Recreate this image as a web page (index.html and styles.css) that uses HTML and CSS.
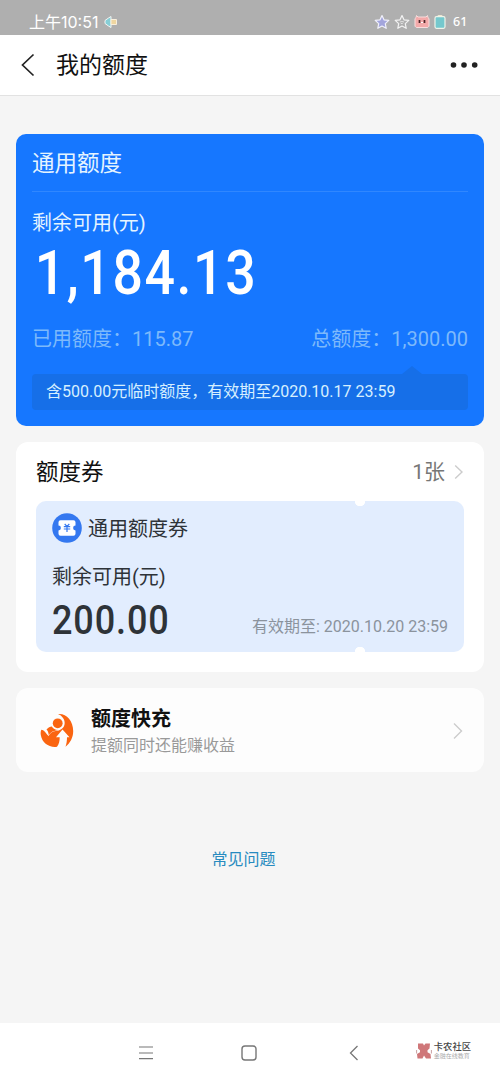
FILE: index.html
```html
<!DOCTYPE html>
<html lang="zh-CN">
<head>
<meta charset="utf-8">
<title>我的额度</title>
<link rel="stylesheet" href="styles.css">
</head>
<body>
<div class="status">
  <span class="time">上午10:51</span>
  <svg class="horn" width="14" height="14" viewBox="0 0 14 14"><path d="M7 1.500v11L4.500 11 1 8.500v-3L4.500 3z" fill="#87ced6" stroke="#f4f6f4"/><path d="M7 4.500h5.500v5H7z" fill="#efd6a0" stroke="#f8eedb"/></svg>
  <div class="status-icons">
    <svg width="16" height="16" viewBox="0 0 16 16"><path d="M8 1.500l2 4.300 4.800.6-3.500 3.200.9 4.700L8 12l-4.200 2.300.9-4.700L1.200 6.400 6 5.800z" fill="#a3a5dc" stroke="#f1f1fb" stroke-width="1.200" stroke-linejoin="round"/></svg>
    <svg width="16" height="16" viewBox="0 0 16 16"><path d="M8 1.500l2 4.300 4.800.6-3.500 3.200.9 4.700L8 12l-4.200 2.300.9-4.700L1.200 6.400 6 5.800z" fill="none" stroke="#f3f3f3" stroke-width="1.200" stroke-linejoin="round"/><path d="M6 8q2-1 4 0M6.800 9.500h2" stroke="#eee" fill="none" stroke-width=".8"/></svg>
    <svg width="16" height="16" viewBox="0 0 16 16"><path d="M2.500 1.500L4 3h8l1.500-1.500.4 2 1.100 1v7.700l-1.300 1.300H2.300L1 12.200V4.500l1.100-1z" fill="#f3aaaa" stroke="#f8dddd"/><path d="M5.500 6v3M10.500 6v3" stroke="#4a2528" stroke-width="1.700"/><path d="M7 8.500h2" stroke="#fff"/></svg>
    <svg width="12" height="16" viewBox="0 0 12 16"><rect x="3.500" y="1" width="5" height="3" rx="1" fill="#eee7cf"/><rect x="1" y="2.700" width="10" height="11.600" rx="1.500" fill="#75c8cd" stroke="#eef3e9" stroke-width="1.200"/></svg>
    <span class="battery">61</span>
  </div>
</div>
<header class="nav">
  <svg class="back" width="16" height="24" viewBox="0 0 16 24"><path d="M13.500 1.500L2.500 12l11 10.500" fill="none" stroke="#222" stroke-width="1.700"/></svg>
  <h1 class="nav-title">我的额度</h1>
  <svg class="more" width="28" height="8" viewBox="0 0 28 8"><g fill="#222"><circle cx="3.500" cy="4" r="2.800"/><circle cx="14" cy="4" r="2.800"/><circle cx="24.700" cy="4" r="2.800"/></g></svg>
</header>
<main class="content">
  <section class="limit">
    <h2 class="limit-title">通用额度</h2>
    <div class="label">剩余可用(元)</div>
    <div class="total">1,184.13</div>
    <div class="split"><span>已用额度：115.87</span><span>总额度：1,300.00</span></div>
    <div class="tip">含500.00元临时额度，有效期至2020.10.17 23:59</div>
  </section>
  <section class="vouchers">
    <div class="vouchers-head">
      <h2 class="vouchers-title">额度券</h2>
      <span class="count">1张</span>
      <svg width="10" height="16" viewBox="0 0 10 16"><path d="M1.200 1.500L8 8l-6.800 6.500" fill="none" stroke="#ccc" stroke-width="1.400"/></svg>
    </div>
    <div class="coupon">
      <div class="coupon-name">
        <svg width="30" height="30" viewBox="0 0 30 30"><circle cx="15" cy="15" r="14.800" fill="#3478f0"/><path d="M8.500 7.300h13q2 0 2 2v3.300a2.400 2.400 0 0 0 0 4.800v3.300q0 2-2 2h-13q-2 0-2-2v-3.300a2.400 2.400 0 0 0 0-4.800v-3.300q0-2 2-2z" fill="#fff"/><path d="M12.700 11l2.300 2.300 2.300-2.300M11.800 13.700h6.400M11.800 16h6.400M15 13.300v5.600" fill="none" stroke="#3478f0" stroke-width="1.200"/></svg>
        <span class="coupon-title">通用额度券</span>
      </div>
      <div class="coupon-label">剩余可用(元)</div>
      <div class="coupon-foot"><span class="coupon-amount">200.00</span><span class="expiry">有效期至: 2020.10.20 23:59</span></div>
    </div>
  </section>
  <section class="boost">
    <svg class="boost-icon" width="34" height="36" viewBox="0 0 34 36"><path d="M18 1C26 0 33.200 7.500 33.200 18c0 6.500-3 12-7.700 15.800 1-3 1.500-6 1.500-9.600h2.500l-7-7.700-6.500 7.700h3.700c0 4-.7 7-2.700 9.600C9.500 35 2 30 .8 22c-.3-2.200-.1-3.800.6-5.200 3.300.2 4.300 4 7.200 6.200 1.500-2.800 3.800-4.700 7-5 4.500-.3 8.400-2.500 9-7C25.200 6.500 22 2.500 18 1z" fill="#fa6511"/><circle cx="17.700" cy="10.300" r="4.900" fill="#fa6511"/><path d="M6.500 16.500c1.800-1.800 3.500-2.900 5.300-3 1.500 2.200 3.300 3.200 6.200 3.600-4.300.7-7 2-9.300 4.800-.2-2.300-.9-4-2.200-5.400z" fill="#fa6511"/></svg>
    <div class="boost-text"><h3 class="boost-title">额度快充</h3><p class="boost-sub">提额同时还能赚收益</p></div>
    <svg width="12" height="18" viewBox="0 0 12 18"><path d="M2 1.500L9.500 9 2 16.500" fill="none" stroke="#ccc" stroke-width="1.400"/></svg>
  </section>
  <a class="faq">常见问题</a>
</main>
<footer class="system-bar">
  <svg width="16" height="16" viewBox="0 0 16 16"><path d="M1 2h14M1 8h14M1 13.700h14" stroke="#777" stroke-width="1.200"/></svg>
  <svg width="16" height="16" viewBox="0 0 16 16"><rect x="1" y="1" width="14" height="14" rx="3" fill="none" stroke="#777" stroke-width="1.400"/></svg>
  <svg width="10" height="16" viewBox="0 0 10 16"><path d="M8.500 1L1.500 8l7 7" fill="none" stroke="#777" stroke-width="1.300"/></svg>
  <div class="brand">
    <svg width="16" height="16" viewBox="0 0 16 16"><path d="M2 .5h5l1 2 1.500-2H14l-.5 5-2 1.800v2l3 1.700.5 4.500h-5l-2-3-1.500 3H1.500L1 11l3-1.700v-2L2 5.500z" fill="#cf7779"/><path d="M.6 7v3.500M15.400 7v3.500" stroke="#c9a0a0"/></svg>
    <div class="brand-text"><span class="brand-name">卡农社区</span><span class="brand-sub">金融在线教育</span></div>
  </div>
</footer>
</body>
</html>
```

FILE: styles.css
```css
* { box-sizing: border-box; }
body {
  margin: 0;
  width: 500px;
  height: 1083px;
  display: flex;
  flex-direction: column;
  background: #f5f5f5;
  font-family: Roboto, "Noto Sans CJK SC", sans-serif;
  color: #111;
  overflow: hidden;
}
h1, h2, h3, p { margin: 0; font-weight: 400; }
svg { display: block; flex: none; }

.status {
  height: 35px;
  flex: none;
  display: flex;
  align-items: center;
  padding: 9px 32px 0 29px;
  background: #afafaf;
  color: #fff;
}
.time { font: 400 16px/24px Inter, "Noto Sans CJK SC", sans-serif; width: 69px; white-space: nowrap; }
.horn { margin-left: 6px; }
.status-icons { margin-left: auto; display: flex; align-items: center; gap: 4px; }
.battery { font: 500 12.500px/20px "Noto Sans", sans-serif; margin-left: 3px; width: 15px; }

.nav {
  height: 61px;
  flex: none;
  display: flex;
  align-items: center;
  padding: 0 22px 0 20px;
  background: #fff;
  border-bottom: 1px solid #e2e2e2;
}
.nav-title { margin-left: 20px; padding-top: 2px; font-size: 23px; line-height: 32px; }
.more { margin-left: auto; }

.content { flex: 1; padding: 38px 16px 0; display: flex; flex-direction: column; }
.limit {
  height: 292px;
  border-radius: 10px;
  background: #1677ff;
  padding: 0 16px;
  color: #fff;
}
.limit-title {
  height: 58px;
  border-bottom: 1px solid #3087ff;
  font-size: 22.500px;
  line-height: 58px;
  color: #e5f4ff;
}
.label { margin-top: 16px; font-size: 20px; line-height: 30px; color: #e5f4ff; }
.total {
  height: 71px;
  padding-left: 3px;
  font-size: 61px;
  line-height: 71px;
  font-weight: 500;
  letter-spacing: 1.800px;
  transform: scaleX(.88);
  transform-origin: left;
  white-space: nowrap;
}
.split {
  margin-top: 15px;
  display: flex;
  justify-content: space-between;
  font-size: 20px;
  line-height: 30px;
  color: #7db9fb;
}
.tip {
  position: relative;
  margin-top: 20px;
  height: 36px;
  border-radius: 4px;
  padding-left: 14px;
  background: #166fe8;
  font-size: 16px;
  line-height: 36px;
  color: #d6efff;
}
.tip::before {
  content: "";
  position: absolute;
  left: 370px;
  top: -8px;
  border: solid transparent;
  border-width: 0 10px 8px;
  border-bottom-color: #166fe8;
}

.vouchers {
  margin-top: 16px;
  height: 230px;
  padding: 0 20px;
  border-radius: 12px;
  background: #fff;
}
.vouchers-head { height: 59px; display: flex; align-items: center; }
.vouchers-title { font-size: 22.500px; line-height: 32px; }
.count { margin-left: auto; margin-right: 9px; font-size: 21px; line-height: 32px; color: #777; }
.coupon {
  height: 151px;
  border-radius: 10px;
  padding: 12px 16px 0;
  background:
    radial-gradient(circle at 324px 0, #fff 5px, transparent 5.500px),
    radial-gradient(circle at 324px 151px, #fff 5px, transparent 5.500px),
    #e2edfe;
  color: #2e3338;
}
.coupon-name { height: 30px; display: flex; align-items: center; gap: 6px; font-size: 20px; line-height: 30px; }
.coupon-title { padding-top: 2px; }
.coupon-label { margin-top: 19px; font-size: 20px; line-height: 30px; }
.coupon-foot { height: 56px; display: flex; align-items: center; justify-content: space-between; }
.coupon-amount { width: 120px; padding-top: 1px; font-size: 40px; line-height: 56px; font-weight: 500; letter-spacing: 1px; transform: scaleX(.9); transform-origin: left; white-space: nowrap; }
.expiry { margin-top: 13px; font-size: 16px; line-height: 24px; color: #8b939d; }

.boost {
  margin-top: 16px;
  height: 84px;
  padding: 2px 20px 0 24px;
  display: flex;
  align-items: center;
  border-radius: 12px;
  background: #fdfdfd;
}
.boost-text { margin-left: 17px; flex: 1; }
.boost-title { font-size: 20px; line-height: 28px; font-weight: 700; }
.boost-sub { font-size: 16px; line-height: 25px; color: #999; }
.faq { align-self: center; margin: 76px 0 0 -13px; font-size: 16px; line-height: 24px; color: #278bc0; }

.system-bar {
  height: 60px;
  flex: none;
  display: flex;
  align-items: center;
  padding: 0 29px 0 138px;
  background: #fff;
}
.system-bar > svg:nth-child(2) { margin-left: 87px; }
.system-bar > svg:nth-child(3) { margin-left: 92px; }
.brand { margin: -4px 0 0 auto; display: flex; align-items: center; gap: 2px; }
.brand-text { display: flex; flex-direction: column; }
.brand-name { font-size: 9.300px; line-height: 10px; color: #444; font-weight: 500; }
.brand-sub { font-size: 6px; line-height: 8px; color: #aaa; white-space: nowrap; }
```
